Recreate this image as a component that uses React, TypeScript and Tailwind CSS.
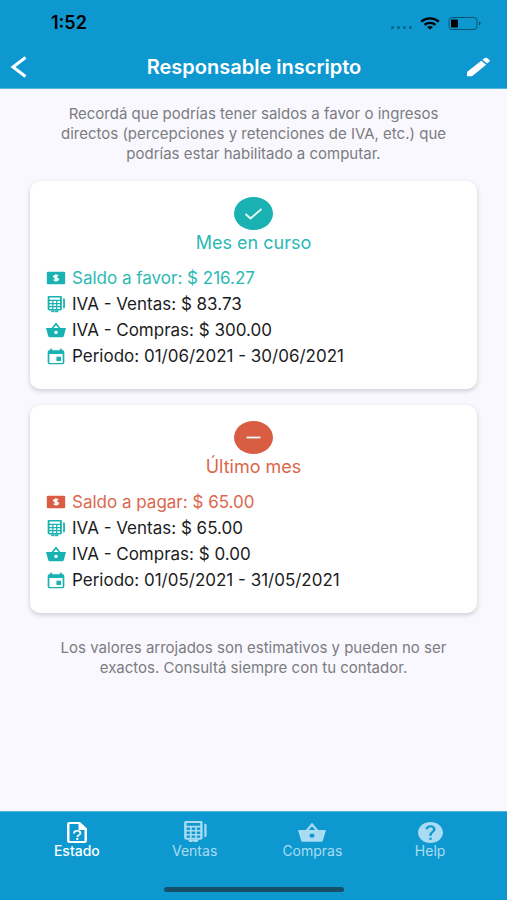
import type { ReactNode } from "react";

type IconProps = { className?: string };

function Glyph({ className, children }: { className?: string; children: ReactNode }) {
  return (
    <svg viewBox="0 0 24 24" preserveAspectRatio="none" fill="currentColor" aria-hidden="true" className={className}>
      {children}
    </svg>
  );
}

const CashIcon = ({ className }: IconProps) => (
  <Glyph className={className}>
    <rect x="1" y="2.500" width="22" height="19" rx="1.500" />
    <path
      d="M14.600 9.200C14 8.400 13.200 8.200 12 8.200c-1.500 0-2.500.7-2.500 1.800 0 2.600 5.200 1.300 5.200 4 0 1.200-1.100 1.900-2.700 1.900-1.300 0-2.300-.4-2.900-1.300M12 6.500v11"
      fill="none"
      stroke="#fff"
      strokeWidth="2"
    />
  </Glyph>
);

const RegisterIcon = ({ className }: IconProps) => (
  <Glyph className={className}>
    <path
      fillRule="evenodd"
      d="M3.500 0h14A1.500 1.500 0 0 1 19 1.500v17a2 2 0 0 1-2 2H4a2 2 0 0 1-2-2v-17A1.500 1.500 0 0 1 3.500 0ZM4.200 2.200v3h12.600v-3ZM4.200 7.200v2.700h3.200V7.200Zm4.700 0v2.700h3.200V7.200Zm4.700 0v2.700h3.200V7.200ZM4.200 11.500v2.700h3.200v-2.700Zm4.700 0v2.700h3.200v-2.700Zm4.700 0v2.700h3.200v-2.700ZM4.200 15.800v2.500h3.200v-2.500Zm4.700 0v2.500h3.200v-2.500Zm4.700 0v2.500h3.200v-2.500Z"
    />
    <path d="M20.600 3v14.500h.6a1.500 1.500 0 0 0 1.500-1.500V4.500A1.500 1.500 0 0 0 21.200 3ZM5.500 20.500h10l-1.500 2.500h-3.200v-1H9.500v1H7Z" />
  </Glyph>
);

const BasketIcon = ({ className }: IconProps) => (
  <Glyph className={className}>
    <path
      fillRule="evenodd"
      d="M12 .8 17.300 9H24l-2.700 12.500a1.500 1.500 0 0 1-1.500 1.200H4.200a1.500 1.500 0 0 1-1.500-1.200L0 9h6.700ZM12 4.800 9.200 9h5.600ZM12 13a2.200 2.500 0 1 0 0 5 2.200 2.500 0 0 0 0-5Z"
    />
  </Glyph>
);

const CalendarIcon = ({ className }: IconProps) => (
  <Glyph className={className}>
    <path d="M18 12.500h-5.500v6H18ZM16.500 1v2.200h-9V1H5v2.200H4A2.200 2.200 0 0 0 2 5.500v15A2.200 2.200 0 0 0 4.200 23h15.600a2.200 2.200 0 0 0 2.200-2.500v-15a2.200 2.200 0 0 0-2-2.300h-1V1ZM20 21H4V8.500h16Z" />
  </Glyph>
);

const FileIcon = ({ className }: IconProps) => (
  <Glyph className={className}>
    <path
      fillRule="evenodd"
      d="M4.500 0H15l7 7.500v14a2.500 2.500 0 0 1-2.500 2.500h-15A2.500 2.500 0 0 1 2 21.500v-19A2.500 2.500 0 0 1 4.500 0Zm0 2.400v19.200h15V9H13.500V2.400Z"
    />
    <path d="M9 13c0-2 1.400-3 3.200-3s3.200 1.100 3.200 2.800c0 2.200-3.100 2.200-3.100 4.400" fill="none" stroke="currentColor" strokeWidth="1.800" />
    <rect x="11.200" y="18.200" width="2.200" height="2.200" />
  </Glyph>
);

const HelpIcon = ({ className }: IconProps) => (
  <Glyph className={className}>
    <path d="M12 0C5.400 0 0 5.400 0 12s5.400 12 12 12 12-5.400 12-12S18.600 0 12 0Zm1.200 20.400h-2.400V18h2.400Zm2.500-9.300-1.100 1.100c-.9.900-1.400 1.600-1.400 3.400h-2.400V15c0-1.300.5-2.500 1.400-3.400l1.500-1.500c.4-.4.700-1 .7-1.700a2.400 2.400 0 0 0-4.800 0H7.200a4.800 4.800 0 1 1 9.600 0c0 1.100-.4 2-1.100 2.700Z" />
  </Glyph>
);

function StatusBar() {
  return (
    <div className="flex h-[46px] items-center justify-between pr-[26px] pl-[51px] text-black">
      <span className="text-[18px] leading-6 font-semibold">1:52</span>
      <div className="flex items-center gap-2">
        <div className="flex gap-[3px] pt-2 opacity-35">
          <i className="h-[3px] w-[3px] rounded-full bg-black" />
          <i className="h-[3px] w-[3px] rounded-full bg-black" />
          <i className="h-[3px] w-[3px] rounded-full bg-black" />
          <i className="h-[3px] w-[3px] rounded-full bg-black" />
        </div>
        <svg viewBox="0 0 20 13" className="h-[13px] w-5" fill="none" stroke="currentColor" strokeWidth="2.400" aria-hidden="true">
          <path d="M1.200 4.700c5-4.400 12.600-4.400 17.600 0M4.500 7.900c3.200-2.700 7.800-2.700 11 0" />
          <path d="M10 12.600 7 10.100c1.700-1.400 4.300-1.400 6 0Z" fill="currentColor" stroke="none" />
        </svg>
        <svg viewBox="0 0 33 13" className="h-[13px] w-[33px]" aria-hidden="true">
          <rect x="1" y=".5" width="28" height="12" rx="3" fill="none" stroke="#000" strokeOpacity=".45" />
          <rect x="3" y="2.500" width="7" height="8" rx="1" />
          <path d="M31 4.500c2 .8 2 3.200 0 4Z" fillOpacity=".5" />
        </svg>
      </div>
    </div>
  );
}

function Header() {
  return (
    <header className="border-b border-[#55b4dc] bg-[#0e98d0]">
      <StatusBar />
      <div className="flex h-[42px] items-center justify-between pr-[17px] pl-[10px] text-white">
        <button type="button" aria-label="Volver" className="flex w-8">
          <svg viewBox="0 0 17 22" className="h-[22px] w-[17px]" fill="none" stroke="currentColor" strokeWidth="3" aria-hidden="true">
            <path d="M15.500 1.500 3 11l12.500 9.500" />
          </svg>
        </button>
        <h1 className="text-[20px] leading-6 font-semibold">Responsable inscripto</h1>
        <button type="button" aria-label="Editar" className="flex w-6 justify-end">
          <svg viewBox="0 0 24 20" className="h-5 w-6" fill="currentColor" aria-hidden="true">
            <path d="M1 15 15.200 3.800l5 4L6 19.200H1.500a.5.500 0 0 1-.5-.5ZM16.500 2.800l2.200-1.700c.7-.5 1.700-.5 2.400 0l2.200 1.700c.7.500.7 1.400 0 1.900l-2.200 1.900Z" />
          </svg>
        </button>
      </div>
    </header>
  );
}

type Summary = {
  title: string;
  positive: boolean;
  balance: string;
  sales: string;
  purchases: string;
  period: string;
};

const summaries: Summary[] = [
  {
    title: "Mes en curso",
    positive: true,
    balance: "Saldo a favor: $ 216.27",
    sales: "IVA - Ventas: $ 83.73",
    purchases: "IVA - Compras: $ 300.00",
    period: "Periodo: 01/06/2021 - 30/06/2021",
  },
  {
    title: "Último mes",
    positive: false,
    balance: "Saldo a pagar: $ 65.00",
    sales: "IVA - Ventas: $ 65.00",
    purchases: "IVA - Compras: $ 0.00",
    period: "Periodo: 01/05/2021 - 31/05/2021",
  },
];

function SummaryCard({ item }: { item: Summary }) {
  const tone = item.positive ? "text-[#2bb9b3]" : "text-[#dc674c]";
  const iconTone = item.positive ? "text-[#19b1b1]" : "text-[#d95d42]";
  return (
    <section className="rounded-[10px] bg-white px-4 pt-4 pb-5 shadow-[0_2px_5px_rgba(0,0,0,0.18)]">
      <div className="flex flex-col items-center">
        <svg viewBox="0 0 39 33" className={`h-[33px] w-[39px] ${iconTone}`} aria-hidden="true">
          <ellipse cx="19.500" cy="16.500" rx="19.500" ry="16.500" fill="currentColor" />
          <path
            d={item.positive ? "m11.500 17 5 4.500L27.500 12" : "M12.500 16.500h14"}
            fill="none"
            stroke="#e6fafa"
            strokeWidth="1.800"
          />
        </svg>
        <h2 className={`text-[18px] leading-[26px] ${tone}`}>{item.title}</h2>
      </div>
      <ul className="mt-[9px] text-[17px] leading-[26px] text-[#1c1c1e]">
        <li className={`flex items-center gap-[6px] ${tone}`}>
          <CashIcon className={`h-4 w-5 shrink-0 ${iconTone}`} />
          {item.balance}
        </li>
        <li className="flex items-center gap-[6px]">
          <RegisterIcon className="h-[17px] w-5 shrink-0 text-[#19b1b1]" />
          {item.sales}
        </li>
        <li className="flex items-center gap-[6px]">
          <BasketIcon className="h-4 w-5 shrink-0 text-[#19b1b1]" />
          {item.purchases}
        </li>
        <li className="flex items-center gap-[6px]">
          <CalendarIcon className="h-[17px] w-5 shrink-0 text-[#19b1b1]" />
          {item.period}
        </li>
      </ul>
    </section>
  );
}

const tabs = [
  { label: "Estado", Icon: FileIcon, size: "h-[21px] w-6", active: true },
  { label: "Ventas", Icon: RegisterIcon, size: "h-[22px] w-[26px]", active: false },
  { label: "Compras", Icon: BasketIcon, size: "h-[21px] w-7", active: false },
  { label: "Help", Icon: HelpIcon, size: "h-[21px] w-[25px]", active: false },
];

function TabBar() {
  return (
    <footer className="border-t border-[#55b4dc] bg-[#0e98d0] pb-2">
      <nav className="grid grid-cols-4 px-[18px] pt-[9px]">
        {tabs.map(({ label, Icon, size, active }) => (
          <a
            key={label}
            href={`#${label.toLowerCase()}`}
            aria-current={active ? "page" : undefined}
            className={`flex flex-col items-center text-[14px] leading-4 ${active ? "font-medium text-white" : "text-[#a9dcf2]"}`}
          >
            <span className="flex h-[22px] items-center">
              <Icon className={size} />
            </span>
            {label}
          </a>
        ))}
      </nav>
      <div className="mx-auto mt-7 h-[5px] w-[180px] rounded-full bg-[#174f68]" />
    </footer>
  );
}

export default function App() {
  return (
    <div className="flex min-h-screen flex-col bg-[#f8f8fe] font-['Inter',sans-serif]">
      <Header />
      <main className="flex-1 px-[30px] pt-[15px]">
        <p className="px-5 text-center text-[15px] leading-5 text-[#7c7c80]">
          Recordá que podrías tener saldos a favor o ingresos directos (percepciones y retenciones de IVA, etc.) que podrías
          estar habilitado a computar.
        </p>
        <div className="mt-[17px] flex flex-col gap-4">
          {summaries.map((item) => (
            <SummaryCard key={item.title} item={item} />
          ))}
        </div>
        <p className="mt-[25px] px-5 text-center text-[15px] leading-5 text-[#7c7c80]">
          Los valores arrojados son estimativos y pueden no ser exactos. Consultá siempre con tu contador.
        </p>
      </main>
      <TabBar />
    </div>
  );
}
